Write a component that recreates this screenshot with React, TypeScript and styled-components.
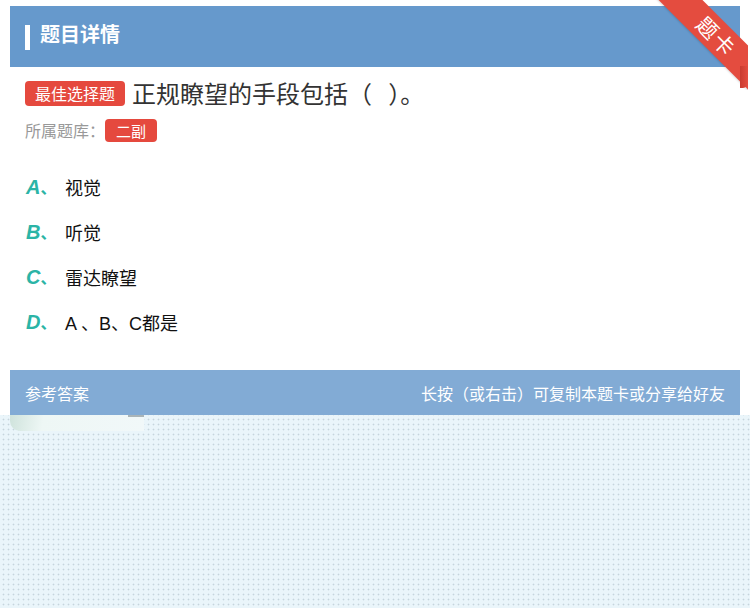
import React from "react";
import styled, { createGlobalStyle } from "styled-components";

const GlobalStyle = createGlobalStyle`
  html, body { margin: 0; padding: 0; background: #ffffff; }
  body { font-family: "Liberation Sans", "Noto Sans CJK SC", sans-serif; }
`;

const Page = styled.div`
  width: 750px;
  min-height: 608px;
  display: flex;
  flex-direction: column;
  background: #ffffff;
`;

const Top = styled.div`
  padding: 6px 10px 0;
`;

const Card = styled.div`
  position: relative;
  background: #ffffff;
`;

const Header = styled.div`
  height: 61px;
  background: #6699cc;
  display: flex;
  align-items: center;
  padding-left: 15px;
  gap: 10px;
`;

const HeaderBar = styled.span`
  width: 5px;
  height: 25px;
  margin-top: 2px;
  background: #ffffff;
`;

const HeaderTitle = styled.h1`
  margin: 0 0 5px;
  font-family: "Noto Sans CJK SC", sans-serif;
  font-size: 20px;
  font-weight: 700;
  color: #ffffff;
  line-height: 1;
`;

const Ribbon = styled.div`
  position: absolute;
  top: -6px;
  right: -8px;
  width: 95px;
  height: 90px;
  overflow: hidden;
  pointer-events: none;
`;

const RibbonBand = styled.div`
  position: absolute;
  left: -12px;
  top: 20px;
  width: 150px;
  height: 31px;
  background: #e44c3f;
  transform: rotate(45deg);
  display: flex;
  align-items: center;
  justify-content: center;
  gap: 2px;
  color: #ffffff;
  font-family: "Noto Sans CJK SC", sans-serif;
  font-size: 21px;
  line-height: 1;
  box-shadow: 0 1px 2px rgba(0, 0, 0, 0.15);
`;

const RibbonTail = styled.div`
  position: absolute;
  right: 0;
  top: 66px;
  width: 8px;
  height: 22px;
  background: linear-gradient(to right, #c93b30, #e44c3f);
  border-radius: 0 0 5px 0;
`;

const Body = styled.div`
  padding: 12px 15px 36px;
  display: flex;
  flex-direction: column;
`;

const QuestionRow = styled.div`
  display: flex;
  align-items: center;
  gap: 7px;
  height: 28px;
`;

const Tag = styled.span<{ $small?: boolean }>`
  display: inline-flex;
  align-items: center;
  justify-content: center;
  background: #e5493e;
  color: #ffffff;
  border-radius: 4px;
  font-family: "Noto Sans CJK SC", sans-serif;
  font-size: ${(p) => (p.$small ? "15px" : "16px")};
  height: ${(p) => (p.$small ? "23px" : "25px")};
  padding: ${(p) => (p.$small ? "0 11px" : "0 10px")};
  line-height: 1;
`;

const QuestionText = styled.span`
  font-family: "Noto Sans CJK SC", sans-serif;
  font-size: 24px;
  color: #333333;
  line-height: 1;
`;

const BankRow = styled.div`
  display: flex;
  align-items: center;
  margin-top: 11px;
  height: 24px;
`;

const BankLabel = styled.span`
  font-family: "Noto Sans CJK SC", sans-serif;
  font-size: 16px;
  color: #999999;
  width: 80px;
`;

const Options = styled.div`
  display: flex;
  flex-direction: column;
  margin-top: 33px;
  gap: 21px;
`;

const Option = styled.div`
  display: flex;
  align-items: center;
  height: 24px;
`;

const Letter = styled.span`
  width: 39px;
  display: inline-flex;
  align-items: baseline;
  color: #2bb4a6;
  font-family: "Liberation Sans", sans-serif;
  font-style: italic;
  font-weight: 700;
  font-size: 20px;
  padding-left: 1px;
`;

const Dun = styled.span`
  font-family: "Noto Sans CJK SC", sans-serif;
  font-style: normal;
  font-size: 16px;
  font-weight: 700;
`;

const OptionText = styled.span`
  font-family: "Liberation Sans", "Noto Sans CJK SC", sans-serif;
  font-size: 18px;
  color: #111111;
`;

const AnswerBar = styled.div`
  height: 45px;
  background: #82abd5;
  display: flex;
  align-items: center;
  justify-content: space-between;
  padding: 0 15px;
  color: #ffffff;
  font-family: "Noto Sans CJK SC", sans-serif;
  font-size: 16px;
`;

const Dotted = styled.div`
  flex: 1;
  background-color: #eaf5fa;
  background-image: radial-gradient(circle, #c6d5dc 0.8px, transparent 1.1px);
  background-size: 5px 5px;
  background-position: 1px 2px;
`;

const Fragment = styled.div`
  margin-left: 10px;
  width: 134px;
  height: 16px;
  background: linear-gradient(100deg, #cfe3dc 0%, #eef7f5 25%, #f1f8f9 100%);
  border-radius: 0 0 0 10px;
  position: relative;
  &::after {
    content: "";
    position: absolute;
    right: 0;
    top: 0;
    width: 16px;
    height: 2px;
    background: #a9b4b8;
  }
`;

const options = [
  { key: "A", text: "视觉" },
  { key: "B", text: "听觉" },
  { key: "C", text: "雷达瞭望" },
  { key: "D", text: "A 、B、C都是" },
];

export default function App() {
  return (
    <Page>
      <GlobalStyle />
      <Top>
        <Card>
          <Header>
            <HeaderBar />
            <HeaderTitle>题目详情</HeaderTitle>
          </Header>
          <Ribbon>
            <RibbonBand>
              <span>题</span>
              <span>卡</span>
            </RibbonBand>
            <RibbonTail />
          </Ribbon>
          <Body>
            <QuestionRow>
              <Tag>最佳选择题</Tag>
              <QuestionText>正规瞭望的手段包括（&nbsp;&nbsp;&nbsp;）。</QuestionText>
            </QuestionRow>
            <BankRow>
              <BankLabel>所属题库：</BankLabel>
              <Tag $small>二副</Tag>
            </BankRow>
            <Options>
              {options.map((o) => (
                <Option key={o.key}>
                  <Letter>
                    {o.key}
                    <Dun>、</Dun>
                  </Letter>
                  <OptionText>{o.text}</OptionText>
                </Option>
              ))}
            </Options>
          </Body>
          <AnswerBar>
            <span>参考答案</span>
            <span>长按（或右击）可复制本题卡或分享给好友</span>
          </AnswerBar>
        </Card>
      </Top>
      <Dotted>
        <Fragment />
      </Dotted>
    </Page>
  );
}
